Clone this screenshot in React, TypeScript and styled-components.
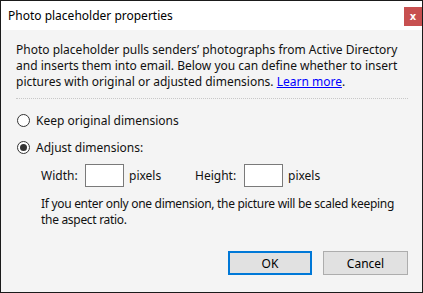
import React from 'react';
import styled, { createGlobalStyle } from 'styled-components';

const GlobalStyle = createGlobalStyle`
  html, body {
    margin: 0;
    padding: 0;
    background: #ffffff;
  }
  * {
    box-sizing: border-box;
  }
`;

const Window = styled.div`
  width: 423px;
  height: 293px;
  display: flex;
  flex-direction: column;
  border: 1px solid #1a1a1a;
  background-color: #f4f4f4;
  font-family: 'Noto Sans', 'Open Sans', sans-serif;
  font-size: 12px;
  color: #111111;
`;

const TitleBar = styled.div`
  height: 29px;
  display: flex;
  align-items: center;
  justify-content: space-between;
  padding-left: 7px;
  background-color: #ffffff;
`;

const Title = styled.span`
  font-size: 12px;
  color: #000000;
`;

const CloseButton = styled.button`
  width: 18px;
  height: 19px;
  margin-top: 6px;
  align-self: flex-start;
  padding: 0;
  border: none;
  background-color: #c75050;
  color: #ffffff;
  font-family: 'DejaVu Sans', sans-serif;
  font-weight: bold;
  font-size: 10px;
  line-height: 19px;
  cursor: pointer;
`;

const Body = styled.div`
  flex: 1;
  display: flex;
  flex-direction: column;
  padding: 12px 14px 0 15px;
`;

const Intro = styled.p`
  margin: 0;
  line-height: 16px;
  white-space: nowrap;
`;

const LearnMore = styled.a`
  color: #0000ff;
  text-decoration: underline;
  cursor: pointer;
`;

const Separator = styled.div`
  margin-top: 8px;
  border-top: 1px dotted #c8c8c8;
`;

const Options = styled.div`
  display: flex;
  flex-direction: column;
  gap: 11px;
  margin-top: 13px;
  padding-left: 1px;
`;

const RadioRow = styled.label`
  display: flex;
  align-items: center;
  gap: 6px;
  height: 16px;
`;

const RadioCircle = styled.span<{ $checked?: boolean }>`
  width: 13px;
  height: 13px;
  border-radius: 50%;
  border: 1px solid #333333;
  background-color: #ffffff;
  display: flex;
  align-items: center;
  justify-content: center;

  &::after {
    content: '';
    width: 7px;
    height: 7px;
    border-radius: 50%;
    background-color: ${p => (p.$checked ? '#333333' : 'transparent')};
  }
`;

const DimRow = styled.div`
  display: flex;
  align-items: center;
  margin-top: 9px;
  padding-left: 25px;
`;

const DimLabel = styled.span<{ $width: number }>`
  width: ${p => p.$width}px;
`;

const DimInput = styled.input`
  width: 39px;
  height: 23px;
  border: 1px solid #7a7a7a;
  background-color: #ffffff;
  margin: 0 5px 0 0;
  padding: 0 3px;
  font-family: inherit;
  font-size: 12px;
`;

const Pixels = styled.span<{ $width?: number }>`
  width: ${p => (p.$width ? `${p.$width}px` : 'auto')};
`;

const Note = styled.p`
  margin: 9px 0 0 25px;
  line-height: 16px;
  white-space: nowrap;
  letter-spacing: -0.3px;
`;

const Buttons = styled.div`
  display: flex;
  justify-content: flex-end;
  gap: 11px;
  margin-top: 23px;
`;

const DialogButton = styled.button<{ $default?: boolean }>`
  width: ${p => (p.$default ? 84 : 85)}px;
  height: 24px;
  background-color: #e1e1e1;
  border: ${p => (p.$default ? '2px solid #0078d7' : '1px solid #adadad')};
  font-family: inherit;
  font-size: 12px;
  color: #000000;
  padding: 0;
  cursor: pointer;
`;

export default function App() {
  return (
    <>
      <GlobalStyle />
      <Window>
        <TitleBar>
          <Title>Photo placeholder properties</Title>
          <CloseButton>x</CloseButton>
        </TitleBar>
        <Body>
          <Intro>
            Photo placeholder pulls senders’ photographs from Active Directory
            <br />
            and inserts them into email. Below you can define whether to insert
            <br />
            pictures with original or adjusted dimensions. <LearnMore>Learn more</LearnMore>.
          </Intro>
          <Separator />
          <Options>
            <RadioRow>
              <RadioCircle />
              Keep original dimensions
            </RadioRow>
            <RadioRow>
              <RadioCircle $checked />
              Adjust dimensions:
            </RadioRow>
          </Options>
          <DimRow>
            <DimLabel $width={44}>Width:</DimLabel>
            <DimInput />
            <Pixels $width={66}>pixels</Pixels>
            <DimLabel $width={49}>Height:</DimLabel>
            <DimInput />
            <Pixels>pixels</Pixels>
          </DimRow>
          <Note>
            If you enter only one dimension, the picture will be scaled keeping
            <br />
            the aspect ratio.
          </Note>
          <Buttons>
            <DialogButton $default>OK</DialogButton>
            <DialogButton>Cancel</DialogButton>
          </Buttons>
        </Body>
      </Window>
    </>
  );
}
